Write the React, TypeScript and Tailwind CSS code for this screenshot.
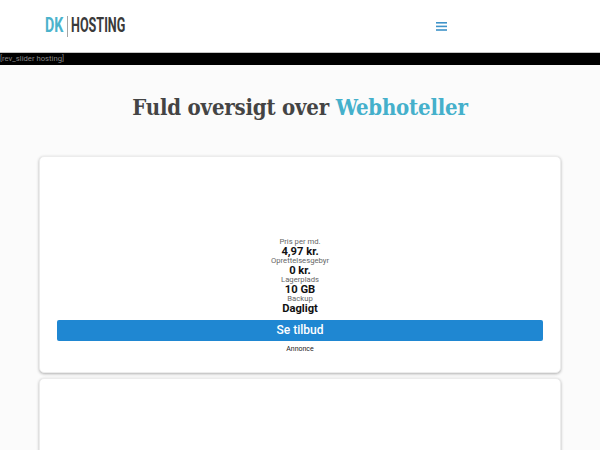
import React from "react";

function Stat({ label, value }: { label: string; value: string }) {
  return (
    <div className="h-[19.33px] flex flex-col items-center">
      <span className="text-[7.7px] h-[8px] leading-[8px] text-[#666]">{label}</span>
      <span className="text-[11.2px] h-[11px] leading-[12px] font-bold text-[#111]">{value}</span>
    </div>
  );
}

function Menu() {
  return (
    <svg width="11" height="9" viewBox="0 0 11 9" className="block" aria-hidden="true">
      <rect x="0" y="0" width="11" height="1.6" fill="#3f93c9" />
      <rect x="0" y="3.6" width="11" height="1.6" fill="#3f93c9" />
      <rect x="0" y="7.2" width="11" height="1.6" fill="#3f93c9" />
    </svg>
  );
}

export default function App() {
  return (
    <div className="h-[450px] overflow-hidden bg-[#fbfbfb] font-['Roboto',sans-serif]">
      <header className="h-[53px] bg-white border-b border-[#c4c4c4] flex items-center">
        <div className="ml-[45px] flex items-center w-[391px] font-['Roboto',sans-serif] text-[21px] font-bold">
          <span className="inline-block w-[19px] text-[#4bb3cc] whitespace-nowrap origin-left scale-x-[0.68]">DK</span>
          <span className="w-px h-[21px] bg-[#a5a5a5] ml-[2.5px] mr-[3.5px]"></span>
          <span className="inline-block text-[#3a3a3a] whitespace-nowrap origin-left scale-x-[0.6]">HOSTING</span>
        </div>
        <div>
          <Menu />
        </div>
      </header>
      <div className="h-[12px] bg-black text-[7.7px] leading-[12px] text-[#888]">[rev_slider hosting]</div>
      <h1 className="mt-[26px] text-center font-['DejaVu_Serif_Condensed','DejaVu_Serif',serif] font-bold text-[22px] leading-[32px] tracking-[-0.2px] text-[#444]">
        Fuld oversigt over <span className="text-[#45b0cb]">Webhoteller</span>
      </h1>
      <main className="mt-[33px] mx-[39px] flex flex-col gap-[5px]">
        <section className="h-[217px] bg-white rounded-[5px] border border-[#ececec] shadow-[0_1px_3px_rgba(0,0,0,0.3)] px-[17px] pt-[80.5px]">
          <div className="flex flex-col items-center">
            <Stat label="Pris per md." value="4,97 kr." />
            <Stat label="Oprettelsesgebyr" value="0 kr." />
            <Stat label="Lagerplads" value="10 GB" />
            <Stat label="Backup" value="Dagligt" />
          </div>
          <button className="mt-[5.2px] block w-full h-[21px] rounded-[2px] bg-[#1f87d2] text-white text-[12px] font-medium leading-[21px] text-center">
            Se tilbud
          </button>
          <p className="mt-[3.5px] text-center text-[7px] leading-[9px] text-[#222]">Annonce</p>
        </section>
        <section className="h-[217px] bg-white rounded-[5px] border border-[#ececec] shadow-[0_1px_3px_rgba(0,0,0,0.3)]"></section>
      </main>
    </div>
  );
}
